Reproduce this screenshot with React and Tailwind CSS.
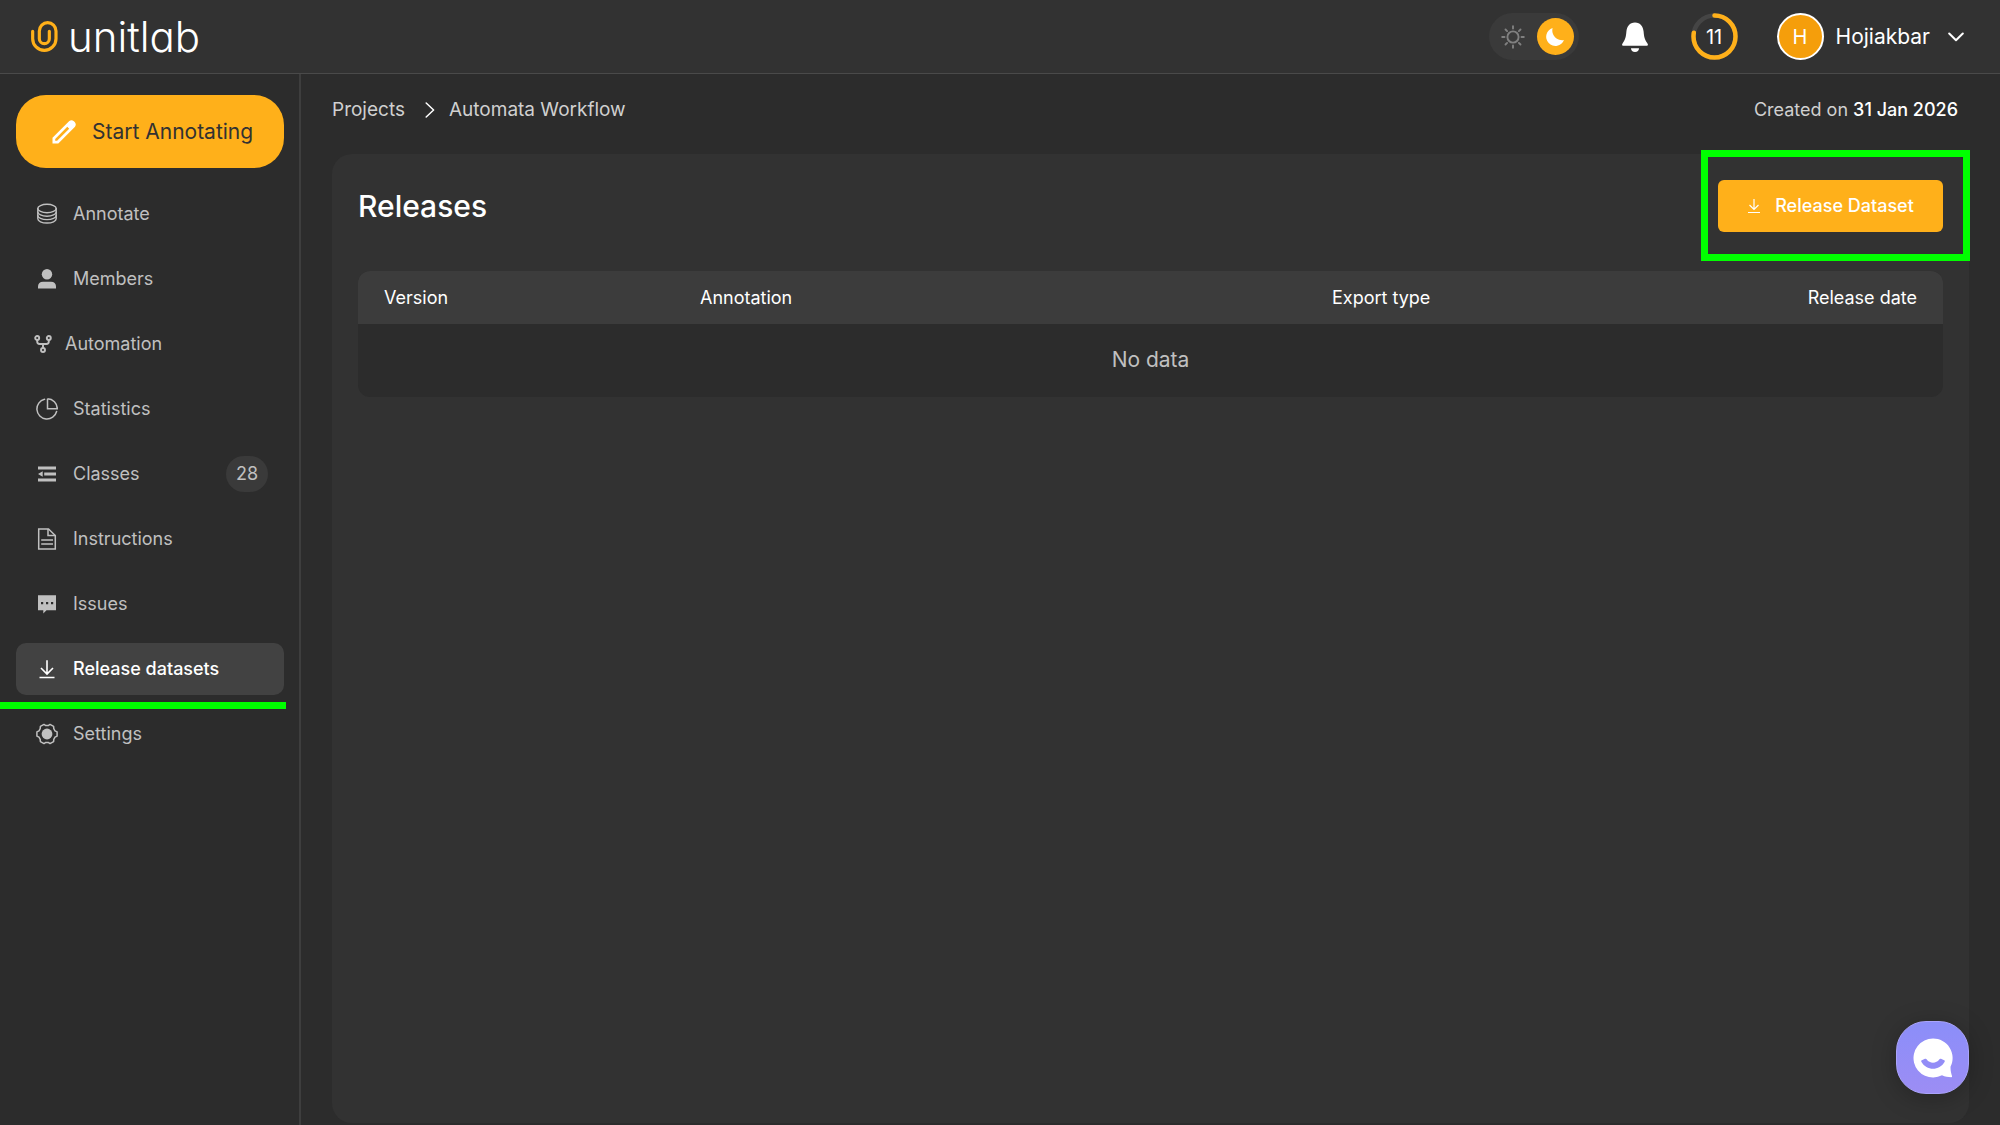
import React from "react";

const stroke = { fill: "none", stroke: "currentColor", strokeLinecap: "round", strokeLinejoin: "round" };

function LogoMark() {
  return (
    <svg viewBox="93 62 81 93" className="h-[31px] w-[27px]" aria-hidden="true">
      <path
        d="M98 93V115A35 35 0 0 0 168 115V92A25 25 0 0 0 118 92V115A15 15 0 0 0 148 115V93"
        fill="none"
        stroke="#ffb01a"
        strokeWidth="9.5"
        strokeLinecap="round"
      />
    </svg>
  );
}

function PencilIcon() {
  return (
    <svg viewBox="0 0 24 24" className="size-6" aria-hidden="true">
      <path
        fillRule="evenodd"
        fill="#fff"
        d="M0.500 23.500V17.700L17.300 1Q19.600 -.6 21.900 1.200L22.900 2.200Q24.600 4.400 23 6.700L6.300 23.500ZM3.200 20.800H5.100L17.200 8.700L15.300 6.800L3.200 18.900Z"
      />
    </svg>
  );
}

const icons = {
  annotate: (
    <svg viewBox="0 0 22 22" className="size-[22px]" aria-hidden="true" {...stroke} strokeWidth="1.400">
      <ellipse cx="11" cy="5.500" rx="9.200" ry="4.200" />
      <path d="M1.800 5.500V15.800C1.800 18.100 5.900 20 11 20S20.200 18.100 20.200 15.800V5.500" />
      <path d="M1.800 9C1.800 11.300 5.900 13.200 11 13.200S20.200 11.300 20.200 9M1.800 12.400C1.800 14.700 5.900 16.600 11 16.600S20.200 14.700 20.200 12.400" />
    </svg>
  ),
  members: (
    <svg viewBox="0 0 22 22" className="size-[22px]" aria-hidden="true" fill="currentColor">
      <circle cx="11" cy="6.200" r="5.200" />
      <path d="M2 20.500V18.500C2 15.500 4 13.700 7 13.700H15C18 13.700 20 15.500 20 18.500V20.500Z" />
    </svg>
  ),
  automation: (
    <svg viewBox="0 0 18 18" className="size-[18px]" aria-hidden="true" {...stroke} strokeWidth="1.900">
      <circle cx="3.200" cy="3" r="2" />
      <circle cx="14.800" cy="3" r="2" />
      <circle cx="9" cy="15" r="2" />
      <path d="M3.200 5V6.500Q3.200 9 5.700 9H12.300Q14.800 9 14.800 6.500V5M9 9V13" />
    </svg>
  ),
  statistics: (
    <svg viewBox="0 0 22 22" className="size-[22px]" aria-hidden="true" {...stroke} strokeWidth="1.500">
      <path d="M8.500 1.300A10 10 0 1 0 20.600 13.500" />
      <path d="M11.500 .7V10.700H21.300A10 10 0 0 0 11.500 .8Z" strokeLinejoin="miter" />
    </svg>
  ),
  classes: (
    <svg viewBox="0 0 22 22" className="size-[22px]" aria-hidden="true" fill="currentColor">
      <path d="M2 3.500H20V6.500H2ZM8.200 9.500H20V12.500H8.200ZM2 15.500H20V18.500H2ZM2 11L6.700 8.200V13.800Z" />
    </svg>
  ),
  instructions: (
    <svg viewBox="0 0 22 22" className="size-[22px]" aria-hidden="true" {...stroke} strokeLinejoin="miter" strokeLinecap="butt" strokeWidth="1.500">
      <path d="M2.700 1H12.500L19.300 7.500V21H2.700Z" />
      <path d="M12 1V7.600H19.300M5.200 12H17M5.200 16H17" />
    </svg>
  ),
  issues: (
    <svg viewBox="0 0 22 22" className="size-[22px]" aria-hidden="true">
      <path d="M2 2.300H20V17.300H10.500L7.300 20.500V17.300H2Z" fill="currentColor" />
      <path d="M5 9H7.200V11.200H5ZM10 9H12.200V11.200H10ZM15 9H17.200V11.200H15Z" fill="#2c2c2c" />
    </svg>
  ),
  release: (
    <svg viewBox="0 0 22 22" className="size-[22px]" aria-hidden="true" {...stroke} strokeLinecap="butt" strokeLinejoin="miter" strokeWidth="1.600">
      <path d="M11 2.300V16M5 10L11 16L17 10M3.500 19.500H18.500" />
    </svg>
  ),
  settings: (
    <svg viewBox="0 0 22 22" className="size-[22px]" aria-hidden="true">
      <path
        {...stroke}
        strokeWidth="1.500"
        d="M21.100 8.900V13.100L19 14.200L17.800 16.300L17.600 18.600L14 20.600L12.200 19.400H9.800L8 20.600L4.400 18.600L4.200 16.300L3 14.200L.9 13.100V8.900L3 7.800L4.200 5.700L4.400 3.400L8 1.400L9.800 2.600H12.200L14 1.400L17.600 3.400L17.800 5.700L19 7.800Z"
      />
      <circle cx="11" cy="11" r="5.400" fill="currentColor" />
    </svg>
  ),
};

const items = [
  { label: "Annotate", icon: icons.annotate },
  { label: "Members", icon: icons.members },
  { label: "Automation", icon: icons.automation, compact: true },
  { label: "Statistics", icon: icons.statistics },
  { label: "Classes", icon: icons.classes, count: 28 },
  { label: "Instructions", icon: icons.instructions },
  { label: "Issues", icon: icons.issues },
  { label: "Release datasets", icon: icons.release, active: true },
  { label: "Settings", icon: icons.settings },
];

function NavItem({ item }) {
  const pad = item.compact ? "pl-[18px]" : "pl-5";
  const tone = item.active ? "bg-[#424242] font-medium text-white" : "text-[#c0c0c0]";
  return (
    <li className="relative">
      <a
        href="#"
        aria-current={item.active ? "page" : undefined}
        className={`flex h-[52px] items-center rounded-[10px] pr-4 text-lg ${item.compact ? "gap-[13px]" : "gap-[15px]"} ${pad} ${tone}`}
      >
        {item.icon}
        <span>{item.label}</span>
        {item.count ? (
          <span className="ml-auto flex h-9 w-[42px] items-center justify-center rounded-full bg-[#3a3a3a]">{item.count}</span>
        ) : null}
      </a>
      {item.active ? <span className="absolute -right-0.5 -bottom-3.5 -left-4 h-[7px] bg-[#00ff00]" /> : null}
    </li>
  );
}

function ThemeSwitch() {
  return (
    <button type="button" aria-label="Toggle theme" className="flex h-[47px] w-[90px] items-center justify-between rounded-full bg-[#3a3a3a] pr-[5px] pl-3">
      <svg viewBox="0 0 24 24" className="size-6 text-[#808080]" aria-hidden="true" {...stroke} strokeWidth="1.900">
        <circle cx="12" cy="12" r="5.600" />
        <path d="M12 1.200V3.500M12 20.500V22.800M1.200 12H3.500M20.500 12H22.800M4.500 4.500L6.100 6.100M17.900 17.900L19.500 19.500M4.500 19.500L6.100 17.900M17.900 6.100L19.500 4.500" />
      </svg>
      <span className="flex size-[37px] items-center justify-center rounded-full bg-[#ffb01a]">
        <svg viewBox="0 0 20 20" className="size-5" aria-hidden="true">
          <path d="M7.600 1A9.200 9.200 0 1 0 19 13A9.800 9.800 0 0 1 7.600 1Z" fill="#fff" />
        </svg>
      </span>
    </button>
  );
}

function Header() {
  return (
    <header className="flex h-[74px] items-center justify-between border-b border-[#4a4a4a] bg-[#323232] pr-9 pl-[31px]">
      <a href="#" aria-label="unitlab" className="flex items-center gap-2.5">
        <LogoMark />
        <span className="text-[42px] leading-[46px] font-light text-white [font-feature-settings:'cv11']">unitlab</span>
      </a>
      <div className="flex items-center">
        <ThemeSwitch />
        <button type="button" aria-label="Notifications" className="ml-[42px]">
          <svg viewBox="0 0 28 32" className="h-8 w-7" aria-hidden="true" fill="#fff">
            <path d="M14 1.500C8.500 1.500 5.900 5.500 5.400 10.500C4.900 16 4.300 18.500 1.800 22C.6 23.800 .9 24.800 2.200 24.800H25.800C27.100 24.800 27.400 23.800 26.200 22C23.700 18.500 23.100 16 22.600 10.500C22.100 5.500 19.500 1.500 14 1.500Z" />
            <path d="M10 27.200H18C18 29.500 16.500 31 14 31S10 29.500 10 27.200Z" />
          </svg>
        </button>
        <div className="relative ml-[42px] flex size-[47px] items-center justify-center text-xl text-white">
          <svg viewBox="0 0 47 47" className="absolute inset-0 size-full" aria-hidden="true" fill="none">
            <circle cx="23.500" cy="23.500" r="21" stroke="#454545" strokeWidth="4.500" />
            <circle cx="23.500" cy="23.500" r="21" stroke="#ffb01a" strokeWidth="4.500" strokeLinecap="round" pathLength="100" strokeDasharray="78 100" transform="rotate(-90 23.500 23.500)" />
          </svg>
          <span className="relative">11</span>
        </div>
        <button type="button" className="ml-[39px] flex items-center text-[21px] text-white">
          <span className="flex size-[47px] items-center justify-center rounded-full border-2 border-white bg-[#f59e0b] text-xl">H</span>
          <span className="ml-3">Hojiakbar</span>
          <svg viewBox="0 0 16 10" className="ml-[18px] h-2.5 w-4" aria-hidden="true" {...stroke} strokeWidth="2">
            <path d="M1.200 1.500L8 8.300L14.800 1.500" />
          </svg>
        </button>
      </div>
    </header>
  );
}

export default function App() {
  return (
    <div className="flex min-h-screen flex-col bg-[#2c2c2c] font-['Inter',sans-serif]">
      <Header />
      <div className="flex grow">
        <aside className="w-[301px] shrink-0 border-r-2 border-[#3e3e3e] pt-[21px] pr-[15px] pl-4">
          <button type="button" className="flex h-[73px] w-full items-center gap-4 rounded-[30px] bg-[#ffb01a] pl-9 text-[21px] text-[#323232]">
            <PencilIcon />
            Start Annotating
          </button>
          <nav className="mt-5">
            <ul className="flex flex-col gap-[13px]">
              {items.map((item) => (
                <NavItem key={item.label} item={item} />
              ))}
            </ul>
          </nav>
        </aside>
        <main className="flex grow flex-col pr-[31px] pb-0.5 pl-[31px]">
          <div className="flex h-20 items-center justify-between pr-[11px] pb-2 text-lg text-[#d0d0d0]">
            <nav aria-label="Breadcrumb" className="flex items-center text-[19px]">
              <a href="#">Projects</a>
              <svg viewBox="0 0 10 16" className="mr-3.5 ml-5 h-4 w-2.5 text-white" aria-hidden="true" {...stroke} strokeWidth="1.500">
                <path d="M1.200 1L8.600 8L1.200 15" />
              </svg>
              <a href="#">Automata Workflow</a>
            </nav>
            <p>
              Created on <span className="font-medium text-white">31 Jan 2026</span>
            </p>
          </div>
          <section className="grow rounded-[20px] bg-[#323232] p-[26px]">
            <div className="flex items-center justify-between">
              <h1 className="text-[30px] leading-9 font-medium text-white">Releases</h1>
              <div className="relative">
                <button type="button" className="flex h-[52px] w-[225px] items-center justify-center gap-3.5 rounded-md bg-[#ffb01a] text-lg font-medium text-white">
                  <svg viewBox="0 0 14 16" className="h-4 w-3.5" aria-hidden="true" {...stroke} strokeLinecap="butt" strokeLinejoin="miter" strokeWidth="1.200">
                    <path d="M7 1V11.500M2.500 7L7 11.500L11.500 7M1 14.500H13" />
                  </svg>
                  Release Dataset
                </button>
                <span className="pointer-events-none absolute -top-[30px] -right-[27px] -bottom-[29px] -left-[17px] border-[7px] border-[#00ff00]" />
              </div>
            </div>
            <div className="mt-[39px] overflow-hidden rounded-xl bg-[#2c2c2c]">
              <table className="w-full table-fixed text-lg text-white">
                <thead className="bg-[#3c3c3c]">
                  <tr className="h-[53px] text-left">
                    <th className="w-[316px] px-[26px] font-normal">Version</th>
                    <th className="w-[632px] px-[26px] font-normal">Annotation</th>
                    <th className="px-[26px] font-normal">Export type</th>
                    <th className="px-[26px] text-right font-normal">Release date</th>
                  </tr>
                </thead>
                <tbody>
                  <tr className="h-[73px]">
                    <td colSpan={4} className="text-center text-[21px] text-[#c0c0c0]">No data</td>
                  </tr>
                </tbody>
              </table>
            </div>
          </section>
        </main>
      </div>
      <button type="button" aria-label="Open chat" className="fixed right-[31px] bottom-[31px] flex size-[73px] items-center justify-center rounded-[30px] border border-[#a9a3fb] bg-linear-to-b from-[#8b8ef9] to-[#9c8df4] shadow-[0_4px_24px_rgba(0,0,0,0.25)]">
        <svg viewBox="0 0 40 40" className="size-10" aria-hidden="true">
          <path d="M20 .5A19.500 19.500 0 1 0 29 37.300C32 38.800 35 39.200 38.200 39.200C39 39.200 39.200 38.600 39 38C38 35 37.300 31.500 37.600 28.600A19.500 19.500 0 0 0 20 .5Z" fill="#fff" />
          <path d="M8.800 22.200L12 20.800Q13 20.300 13.800 21.500C16.500 25.700 23.500 25.700 26.200 21.500Q27 20.300 28 20.800L31.200 22.200C32 22.600 31.900 23.200 31.500 24C26.500 33 13.500 33 8.500 24C8.100 23.200 8 22.600 8.800 22.200Z" fill="#938df7" />
        </svg>
      </button>
    </div>
  );
}
